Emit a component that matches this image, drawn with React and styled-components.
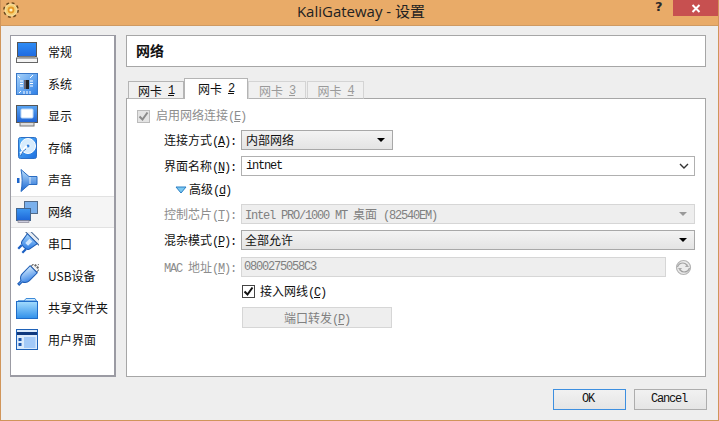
import React from "react";
import styled, { createGlobalStyle } from "styled-components";

const CJK = `"Noto Sans CJK SC", "Liberation Sans", sans-serif`;

const Global = createGlobalStyle`
  html, body { margin: 0; padding: 0; background: #e9ab68; }
  body { width: 719px; height: 421px; overflow: hidden; font-family: ${CJK}; }
`;

const Frame = styled.div`
  width: 719px;
  height: 421px;
  box-sizing: border-box;
  display: flex;
  flex-direction: column;
  background: #e9ab68;
  border-left: 1px solid #d0955a;
  border-right: 1px solid #d0955a;
  border-bottom: 1px solid #d0955a;
`;

const TitleBar = styled.div`
  height: 25px;
  flex: none;
  display: flex;
  align-items: flex-start;
  position: relative;
  border-bottom: 1px solid #cf9a62;
`;

const TitleIcon = styled.svg`
  position: absolute;
  left: 2px;
  top: 2px;
`;

const TitleText = styled.div`
  flex: 1;
  text-align: center;
  font: 15px/22px "Open Sans", ${CJK};
  color: #222;
  padding-left: 3px;
`;

const Help = styled.div`
  position: absolute;
  left: 654px;
  top: -1px;
  font: bold 13px/16px "DejaVu Sans", sans-serif;
  color: #2a2a2a;
`;

const Close = styled.div`
  position: absolute;
  right: 0;
  top: 0;
  width: 45px;
  height: 16px;
  background: #c75050;
  display: flex;
  align-items: center;
  justify-content: center;
`;

const Body = styled.div`
  flex: 1;
  background: #eeeeee;
  display: flex;
  flex-direction: column;
  padding: 9px 12px 10px 9px;
  min-height: 0;
`;

const Main = styled.div`
  flex: 1;
  display: flex;
  gap: 10px;
  min-height: 0;
`;

const Side = styled.div`
  width: 106px;
  box-sizing: border-box;
  background: #fff;
  border: 1px solid #9b9ba3;
  border-width: 1px 2px 2px 1px;
  display: flex;
  flex-direction: column;
`;

const SideRow = styled.div`
  height: 32px;
  flex: none;
  box-sizing: border-box;
  display: flex;
  align-items: center;
  padding-left: 4px;
  gap: 9px;
  font: 12px/16px "Noto Sans CJK SC", sans-serif;
  color: #111;
  background: ${(p) => (p.$active ? "#f5f5f5" : "transparent")};
  border: 1px solid ${(p) => (p.$active ? "#e2e2e2" : "transparent")};
  border-width: 1px 0;
  svg { flex: none; }
`;

const Page = styled.div`
  flex: 1;
  display: flex;
  flex-direction: column;
  min-width: 0;
`;

const Header = styled.div`
  height: 32px;
  box-sizing: border-box;
  flex: none;
  background: #fff;
  border: 1px solid #a6a6a6;
  padding-left: 9px;
  font: bold 14px/29px "Noto Sans CJK SC", sans-serif;
  color: #111;
`;

const Tabs = styled.div`
  display: flex;
  align-items: flex-end;
  height: 32px;
  flex: none;
  padding-left: 2px;
  margin-bottom: -1px;
  position: relative;
  z-index: 1;
`;

const Tab = styled.div`
  box-sizing: border-box;
  width: ${(p) => p.$w}px;
  height: ${(p) => (p.$active ? 21 : 18)}px;
  background: ${(p) => (p.$active ? "#fff" : "#f0f0f0")};
  border: 1px solid ${(p) => (p.$off ? "#d4d4d4" : "#b4b4b4")};
  border-bottom: ${(p) => (p.$active ? "none" : "1px solid #b4b4b4")};
  margin-left: ${(p) => (p.$gap ? 1 : 0)}px;
  color: ${(p) => (p.$off ? "#9a9a9a" : "#111")};
  font: 12px/16px ${CJK};
  display: flex;
  justify-content: center;
  align-items: center;
  padding-top: ${(p) => (p.$active ? 0 : 1)}px;
`;

const Panel = styled.div`
  flex: 1;
  box-sizing: border-box;
  background: #fff;
  border: 1px solid #a6a6a6;
  padding: 8px 10px 0 10px;
  display: grid;
  grid-template-columns: 104px 1fr;
  grid-auto-rows: min-content;
  font: 12px/16px ${CJK};
  color: #111;
`;

const Mono = styled.span`
  font: 12px/16px "Liberation Mono", monospace;
  letter-spacing: -1.2px;
  u { text-underline-offset: 1px; }
`;

const CheckRow = styled.label`
  grid-column: ${(p) => p.$col || "1 / -1"};
  height: ${(p) => p.$h || 18}px;
  display: flex;
  align-items: center;
  gap: ${(p) => p.$gap || 6}px;
  color: ${(p) => (p.$off ? "#8d8d8d" : "#111")};
  margin-bottom: ${(p) => p.$mb || 0}px;
`;

const Box = styled.span`
  box-sizing: border-box;
  width: 13px;
  height: 13px;
  border: 1px solid ${(p) => (p.$off ? "#bbb" : "#444")};
  background: ${(p) => (p.$off ? "#e4e4e4" : "#fff")};
  display: flex;
  align-items: center;
  justify-content: center;
  margin-left: ${(p) => p.$ml || 0}px;
`;

const Label = styled.div`
  height: 20px;
  margin-right: 5px;
  line-height: 20px;
  text-align: right;
  color: ${(p) => (p.$off ? "#8d8d8d" : "#111")};
  white-space: nowrap;
  margin-bottom: ${(p) => p.$mb}px;
`;

const Control = styled.div`
  box-sizing: border-box;
  width: ${(p) => p.$w || "454px"};
  height: 20px;
  margin-bottom: ${(p) => p.$mb}px;
  border: 1px solid ${(p) =>
    p.$off ? "#d6d6d6" : p.$combo ? "#a8a8a8" : "#b0b0b0"};
  background: ${(p) =>
    p.$off
      ? "#eeeeee"
      : p.$combo
      ? "linear-gradient(#f3f3f3, #e4e4e4)"
      : "#fff"};
  display: flex;
  align-items: center;
  justify-content: space-between;
  padding: 0 7px 0 ${(p) => p.$pl || 4}px;
  color: ${(p) => (p.$off ? "#808080" : "#111")};
  line-height: 18px;
`;

const Arrow = styled.span`
  width: 0;
  height: 0;
  border-left: 4px solid transparent;
  border-right: 4px solid transparent;
  border-top: 4px solid ${(p) => (p.$off ? "#999" : "#000")};
`;

const Chevron = styled.svg`
  margin-right: -2px;
`;

const MacRow = styled.div`
  display: flex;
  align-items: center;
  gap: 9px;
  margin-bottom: 6px;
  height: 20px;
`;

const Expander = styled.div`
  grid-column: 1 / -1;
  height: 16px;
  padding-left: 38px;
  margin-bottom: 6px;
  display: flex;
  align-items: center;
  gap: 2px;
`;

const PortButton = styled.div`
  grid-column: 2;
  box-sizing: border-box;
  width: 150px;
  height: 21px;
  margin-left: 1px;
  border: 1px solid #d6d6d6;
  background: #eeeeee;
  color: #808080;
  text-align: center;
  line-height: 19px;
`;

const Footer = styled.div`
  flex: none;
  height: 33px;
  margin-right: -1px;
  display: flex;
  justify-content: flex-end;
  align-items: flex-end;
  gap: 8px;
`;

const Btn = styled.div`
  box-sizing: border-box;
  width: 73px;
  height: 21px;
  padding-right: 3px;
  border: 1px solid ${(p) => (p.$primary ? "#3d8fe0" : "#adadad")};
  background: linear-gradient(#f1f1f1, #e5e5e5);
  color: #111;
  font: 12px/19px "Liberation Mono", monospace;
  letter-spacing: -1.2px;
  text-align: center;
`;

const Shot = ({ children }) => (
  <svg width="24" height="24" viewBox="0 0 24 24">{children}</svg>
);

const Blue = ({ id, a = "#7cc0fb", b = "#1565d8", x2 = 0, y2 = 1 }) => (
  <linearGradient id={id} x1="0" y1="0" x2={x2} y2={y2}>
    <stop offset="0" stopColor={a} />
    <stop offset="1" stopColor={b} />
  </linearGradient>
);

const IGeneral = () => (
  <Shot>
    <defs><Blue id="g1" a="#2f8df5" b="#1f6ae0" /></defs>
    <rect x="2.5" y="2.5" width="19" height="14" fill="url(#g1)" stroke="#555" strokeWidth="1" />
    <rect x="1.5" y="18" width="21" height="4.5" fill="#f4f4f4" stroke="#666" strokeWidth="1" />
    <rect x="4" y="16.5" width="16" height="1.5" fill="#999" />
  </Shot>
);
const ISystem = () => (
  <Shot>
    <defs><Blue id="g2" a="#a9d4fb" b="#2c7ee6" x2="1" /></defs>
    <rect x="1.5" y="1.5" width="21" height="21" fill="url(#g2)" stroke="#3a78c8" />
    <rect x="9" y="8" width="5" height="9" fill="#222" />
    <rect x="9" y="8" width="2" height="9" fill="#667" />
    <path d="M5 9h3M5 11.5h3M5 14h3M15 9h3M15 11.5h3M15 14h3M9 19v3M12 19v3M15 19v3M15 6l3-3M5 6l-2-2M6 19l-2 2" stroke="#fff" strokeWidth="1" />
  </Shot>
);
const IDisplay = () => (
  <Shot>
    <defs><Blue id="g3" a="#5aa5f2" b="#1e63d6" /></defs>
    <rect x="1.5" y="1.5" width="21" height="17" fill="url(#g3)" stroke="#555" />
    <rect x="6" y="5" width="12" height="9" rx="1" fill="#fff" stroke="#bcd9f8" />
    <rect x="5" y="18.5" width="14" height="3.5" fill="#ddd" stroke="#777" />
  </Shot>
);
const IStorage = () => (
  <Shot>
    <defs><Blue id="g4" a="#56b4fb" b="#1c6fe0" x2="1" /></defs>
    <rect x="3.5" y="1.5" width="18" height="21" rx="2" fill="url(#g4)" stroke="#2d6fc4" />
    <circle cx="13" cy="10" r="7.5" fill="#d8ecfd" stroke="#fff" />
    <circle cx="13" cy="10" r="2" fill="#2d7fe0" stroke="#fff" strokeWidth="0.8" />
    <path d="M6 19c1-5 3-7 6-9M5 17l3-2" stroke="#fff" strokeWidth="1.6" fill="none" />
    <path d="M6 20c1-4 3-6 5-7" stroke="#2d6fc4" strokeWidth="1" fill="none" />
  </Shot>
);
const ISound = () => (
  <Shot>
    <defs><Blue id="g5" a="#bfe2fd" b="#1664d2" /></defs>
    <path d="M6 1.5l8 7h8v8h-8l-8 7c1.5-7 1.5-15 0-22z" fill="url(#g5)" stroke="#2a6cc2" />
    <rect x="2" y="10" width="2.5" height="5" fill="#1d66cc" />
    <path d="M15 9v7" stroke="#fff" strokeWidth="0.8" />
  </Shot>
);
const INetwork = () => (
  <Shot>
    <defs><Blue id="g6" a="#3d98f2" b="#1d66d8" /></defs>
    <rect x="9.5" y="1.5" width="13" height="12" fill="#7ab0ec" stroke="#526b8a" />
    <rect x="8" y="14" width="8" height="3" fill="#8aa" />
    <rect x="1.5" y="8.5" width="14" height="12" fill="url(#g6)" stroke="#43658e" />
    <rect x="3" y="20.5" width="11" height="2" fill="#ccd" stroke="#778" strokeWidth="0.6" />
  </Shot>
);
const ISerial = () => (
  <Shot>
    <defs><Blue id="g7" a="#a8d6fc" b="#1a6ee0" x2="1" /></defs>
    <g transform="rotate(45 12 12) translate(0 -1)">
      <rect x="3" y="1.5" width="18" height="4" fill="#e9eef4" stroke="#4a6a96" />
      <path d="M5 5.5h14l-1.5 9c-.3 2-2.5 3-5.5 3s-5.2-1-5.5-3z" fill="url(#g7)" stroke="#1d5cb5" />
      <rect x="8" y="17.5" width="2.2" height="5" fill="#1a5fc4" />
      <rect x="13.8" y="17.5" width="2.2" height="5" fill="#1a5fc4" />
      <path d="M10 7.5h4v6h-4z" fill="#cfe6fd" />
    </g>
  </Shot>
);
const IUsb = () => (
  <Shot>
    <defs><Blue id="g8" a="#d5ecfe" b="#1a6ee0" x2="1" /></defs>
    <g transform="rotate(45 12 12) translate(0 -1)">
      <rect x="8" y="-3.5" width="8" height="7" fill="#f2f2f2" stroke="#666" />
      <rect x="9.5" y="-1.5" width="2" height="2" fill="#666" />
      <rect x="12.5" y="-1.5" width="2" height="2" fill="#666" />
      <path d="M7 3.5h10v11c0 3-2 5-4 6v4.500h-2v-4.500c-2-1-4-3-4-6z" fill="url(#g8)" stroke="#1d5cb5" />
    </g>
  </Shot>
);
const IFolder = () => (
  <Shot>
    <defs><Blue id="g9" a="#a4dcfd" b="#2f8fea" /></defs>
    <path d="M3 5h6l2-2.5h9l1.5 2.5z" fill="#cdeafe" stroke="#3d8ad8" strokeWidth="1" />
    <rect x="1.5" y="5.5" width="21" height="17" fill="url(#g9)" stroke="#1f6cc8" />
  </Shot>
);
const IUi = () => (
  <Shot>
    <rect x="1.5" y="1.5" width="21" height="20" fill="#dcebfb" stroke="#1f62b8" />
    <rect x="2" y="4" width="20" height="3" fill="#10397e" />
    <rect x="9" y="9" width="11.5" height="11" fill="#a4caf8" />
    <rect x="3.5" y="10" width="3" height="3" fill="#1b55ad" />
    <rect x="3.5" y="15" width="3" height="3" fill="#1b55ad" />
  </Shot>
);

const items = [
  ["常规", IGeneral], ["系统", ISystem], ["显示", IDisplay], ["存储", IStorage],
  ["声音", ISound], ["网络", INetwork], ["串口", ISerial], ["USB设备", IUsb],
  ["共享文件夹", IFolder], ["用户界面", IUi],
];

const tabs = [
  { n: "1", w: 56 }, { n: "2", w: 64, active: true },
  { n: "3", w: 58, off: true }, { n: "4", w: 57, off: true, gap: true },
];

const Check = ({ color }) => (
  <svg width="11" height="11" viewBox="0 0 11 11">
    <path d="M1.5 5.5l3 3 5-7" fill="none" stroke={color} strokeWidth="2" />
  </svg>
);

const Acc = ({ k, tail = ":" }) => (
  <Mono>(<u>{k}</u>){tail}</Mono>
);

export default function App() {
  return (
    <Frame>
      <Global />
      <TitleBar>
        <TitleIcon width="16" height="16" viewBox="0 0 16 16">
          <circle cx="8" cy="8" r="6.4" fill="none" stroke="#6b4a1e" strokeWidth="3" strokeDasharray="2.6 2.4" />
          <circle cx="8" cy="8" r="6" fill="#f5d27a" stroke="#fbe6a8" strokeWidth="1" />
          <circle cx="8" cy="8" r="3.4" fill="#e79a28" />
          <circle cx="8" cy="8" r="1.6" fill="#fff1c4" />
        </TitleIcon>
        <TitleText>KaliGateway - 设置</TitleText>
        <Help>?</Help>
        <Close>
          <svg width="10" height="9" viewBox="0 0 10 9">
            <path d="M1.5 1l7 7M8.5 1l-7 7" stroke="#fff" strokeWidth="2" />
          </svg>
        </Close>
      </TitleBar>
      <Body>
        <Main>
          <Side>
            {items.map(([t, I]) => (
              <SideRow key={t} $active={t === "网络"}>
                <I />
                <span>{t}</span>
              </SideRow>
            ))}
          </Side>
          <Page>
            <Header>网络</Header>
            <Tabs>
              {tabs.map((t) => (
                <Tab key={t.n} $w={t.w} $active={t.active} $off={t.off} $gap={t.gap}>
                  网卡<Mono>&nbsp;<u>{t.n}</u></Mono>
                </Tab>
              ))}
            </Tabs>
            <Panel>
              <CheckRow $off $mb={5}>
                <Box $off><Check color="#8a8a8a" /></Box>
                <span>启用网络连接<Acc k="E" tail="" /></span>
              </CheckRow>
              <Label $mb={6}>连接方式<Acc k="A" /></Label>
              <Control $combo $w="152px" $mb={6}>
                <span>内部网络</span><Arrow />
              </Control>
              <Label $mb={6}>界面名称<Acc k="N" /></Label>
              <Control $mb={6}>
                <Mono>intnet</Mono>
                <Chevron width="10" height="6" viewBox="0 0 10 6">
                  <path d="M1 1l4 4 4-4" fill="none" stroke="#333" strokeWidth="1.4" />
                </Chevron>
              </Control>
              <Expander>
                <svg width="12" height="8" viewBox="0 0 12 8">
                  <path d="M1 1h10L6 7z" fill="#7cc8f0" stroke="#2a7fc4" />
                </svg>
                <span>高级<Acc k="d" tail="" /></span>
              </Expander>
              <Label $off $mb={6}>控制芯片<Acc k="T" /></Label>
              <Control $off $mb={6} $pl={3}>
                <span><Mono>Intel PRO/1000 MT </Mono>桌面<Mono> (82540EM)</Mono></span>
                <Arrow $off />
              </Control>
              <Label $mb={7}>混杂模式<Acc k="P" /></Label>
              <Control $combo $mb={7} $pl={3}>
                <span>全部允许</span><Arrow />
              </Control>
              <Label $off $mb={6}><Mono>MAC </Mono>地址<Acc k="M" /></Label>
              <MacRow>
                <Control $off $w="425px" $pl={2} $mb={0}>
                  <Mono>0800275058C3</Mono>
                </Control>
                <svg width="17" height="17" viewBox="0 0 17 17">
                  <circle cx="8.5" cy="8.5" r="7" fill="#ececec" stroke="#b4b4b4" strokeWidth="1.2" />
                  <path d="M2.5 8c1-3 3.5-4 5.500-4s3 1 4 2M14.500 9c-1 3-3.500 4-5.500 4s-3-1-4-2" fill="none" stroke="#a0a0a0" strokeWidth="1.2" />
                  <path d="M10 8h4l-2-3zM3 9h4l-2 3z" fill="#aaa" />
                </svg>
              </MacRow>
              <CheckRow $col="2" $gap={5} $mb={7} $h={17}>
                <Box $ml={1}><Check color="#111" /></Box>
                <span>接入网线<Acc k="C" tail="" /></span>
              </CheckRow>
              <PortButton>端口转发<Acc k="P" tail="" /></PortButton>
            </Panel>
          </Page>
        </Main>
        <Footer>
          <Btn $primary>OK</Btn>
          <Btn>Cancel</Btn>
        </Footer>
      </Body>
    </Frame>
  );
}
